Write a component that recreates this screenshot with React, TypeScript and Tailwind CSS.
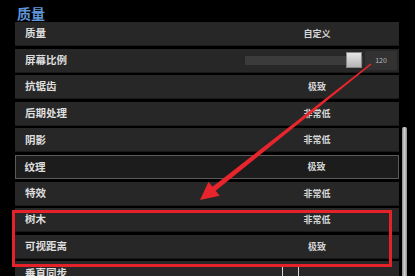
const rows: { label: string; value?: string; kind?: "slider" | "active" | "check" }[] = [
  { label: "质量", value: "自定义" },
  { label: "屏幕比例", kind: "slider" },
  { label: "抗锯齿", value: "极致" },
  { label: "后期处理", value: "非常低" },
  { label: "阴影", value: "非常低" },
  { label: "纹理", value: "极致", kind: "active" },
  { label: "特效", value: "非常低" },
  { label: "树木", value: "非常低" },
  { label: "可视距离", value: "极致" },
  { label: "垂直同步", kind: "check" },
];

function Row({ label, value, kind }: (typeof rows)[number]) {
  const active = kind === "active";
  return (
    <div
      className={`flex items-center h-[24px] shrink-0 ${
        active
          ? "bg-[#1c1c1c] border-[1.5px] border-[#5a5a5a]"
          : "bg-[#272727] border-b border-[#1a1a1a]"
      }`}
    >
      <div
        className={`${
          active ? "w-[228.5px] pl-[8.5px]" : "w-[230px] pl-[10px]"
        } text-[10.5px] font-bold text-[#dedede] leading-none`}
      >
        {label}
      </div>
      {kind === "slider" ? (
        <div className="flex items-center">
          <div className="relative w-[118px] h-[9px] bg-[#3b3b3b]">
            <div className="absolute left-[101px] top-[-4px] w-[16px] h-[16px] bg-gradient-to-b from-[#e6e6e6] to-[#b5b5b5] border border-[#888]" />
          </div>
          <div className="ml-[2px] w-[32px] h-[19px] bg-[#323232] flex items-center justify-center text-[7px] text-[#bbbbbb]">
            120
          </div>
        </div>
      ) : kind === "check" ? (
        <div className="ml-[37px] self-start pt-[4.5px]">
          <div className="w-[17px] h-[17px] border-[1.5px] border-[#d8d8d8]" />
        </div>
      ) : (
        <div className="w-[144px] text-center text-[9px] font-bold text-[#d6d6d6] leading-none">
          {value}
        </div>
      )}
    </div>
  );
}

export default function App() {
  return (
    <div
      className="relative w-[415px] h-[276px] bg-black overflow-hidden flex"
      style={{ fontFamily: '"Noto Sans CJK SC", "Noto Sans", sans-serif' }}
    >
      <div className="w-[399px] pl-[15px] flex flex-col">
        <div className="h-[27px] pl-[2px] pt-[4px] text-[14px] font-bold text-[#5f95d6] leading-[18px]">
          质量
        </div>
        <div className="flex flex-col gap-[2.6px]">
          {rows.map((r) => (
            <Row key={r.label} {...r} />
          ))}
        </div>
      </div>
      <div className="ml-[3px] w-[5px] pt-[127px]">
        <div className="h-full rounded-t-[2px] bg-gradient-to-r from-[#8a8a8a] via-[#d0d0d0] to-[#8a8a8a]" />
      </div>

      <div className="absolute left-[12px] top-[210px] w-[380px] h-[57px] border-[3px] border-[#e5212a]" />

      <svg className="absolute inset-0 pointer-events-none" width="415" height="276" viewBox="0 0 415 276">
        <polygon
          fill="#e8242c"
          points="371.5,64.6 215.7,190.8 219.7,195.8 200,200 208.5,181.8 212.5,186.8 370.5,63.4"
        />
      </svg>
    </div>
  );
}
